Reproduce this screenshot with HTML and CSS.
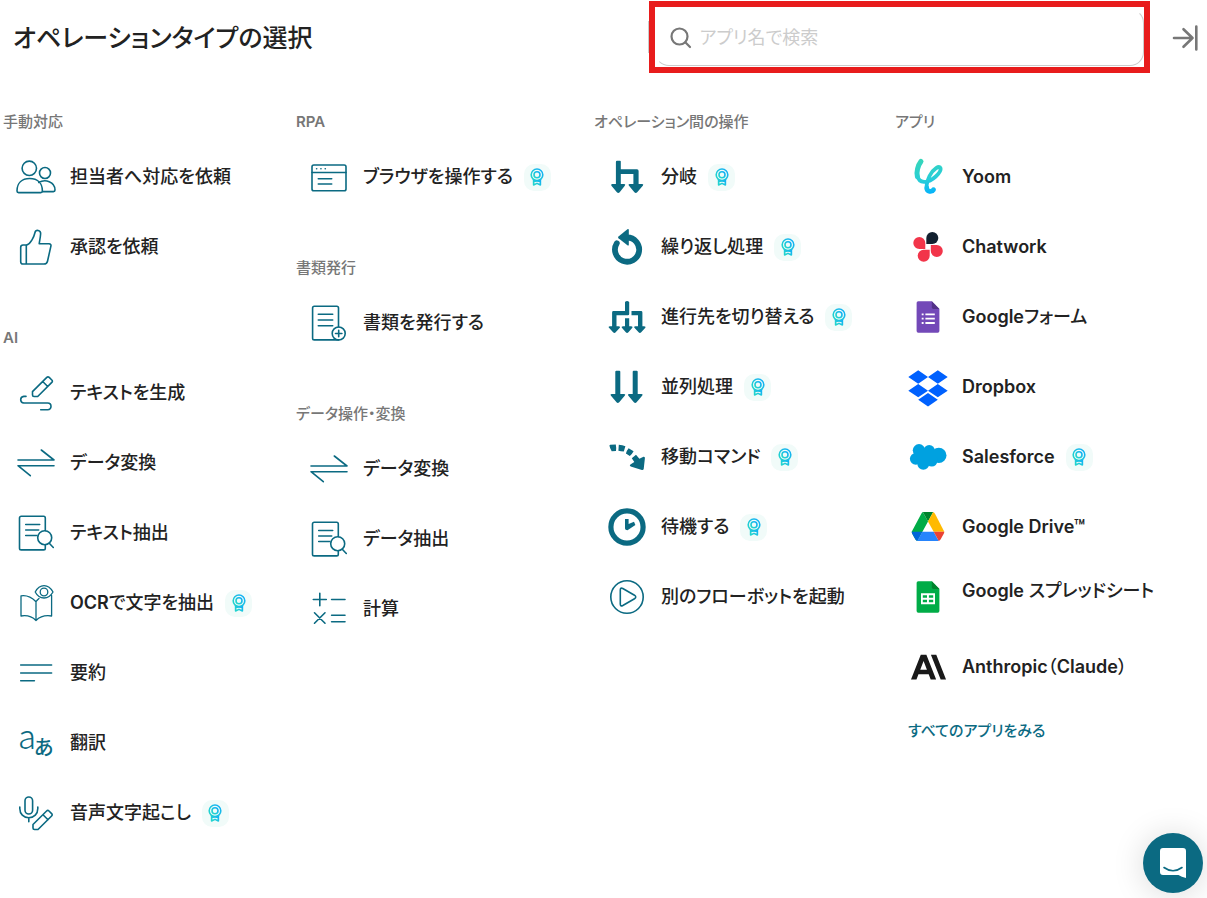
FILE: index.html
```html
<!DOCTYPE html>
<html lang="ja">
<head>
    <meta charset="UTF-8">
    <meta name="viewport" content="width=device-width, initial-scale=1.0">
    <title>オペレーションタイプの選択</title>
    <link rel="stylesheet" href="styles.css">
</head>
<body>
    <!-- shared icons -->
    <svg class="sprite" width="0" height="0" aria-hidden="true">
        <defs>
            <linearGradient id="badge-color" x1="1" y1="0" x2="0" y2="1">
                <stop offset="0.1" stop-color="#12b0f5"/>
                <stop offset="0.8" stop-color="#22d3cf"/>
            </linearGradient>
            <linearGradient id="yoom-color" gradientUnits="userSpaceOnUse" x1="14" y1="2" x2="22" y2="37">
                <stop offset="0" stop-color="#36d6b9"/>
                <stop offset="0.6" stop-color="#27cdd9"/>
                <stop offset="1" stop-color="#04b2fb"/>
            </linearGradient>
        </defs>
        <symbol id="badge" viewBox="0 0 14 18">
            <g fill="none" stroke="url(#badge-color)" stroke-width="1.6" stroke-linejoin="round">
                <circle cx="7" cy="6.8" r="5.8"/>
                <circle cx="7" cy="6.8" r="3"/>
                <path d="M3.6 11.6V17L7 15.4L10.4 17V11.6M3.6 13.6L7 12.8L10.4 13.6"/>
            </g>
        </symbol>
        <symbol id="convert" viewBox="0 0 40 40">
            <path d="M2 17H38L25.3 7M38 22.7H2L14.3 32.7"/>
        </symbol>
        <symbol id="extract" viewBox="0 0 40 40">
            <path d="M29.3 17.5V5a1.7 1.7 0 0 0-1.7-1.7H5.2A1.7 1.7 0 0 0 3.5 5v30.2a1.7 1.7 0 0 0 1.7 1.7h22.4a1.7 1.7 0 0 0 1.7-1.7V32M9.7 11.5h14M9.7 17h13M9.7 22.5h11M33.5 30.5l3.8 4"/>
            <circle cx="28.7" cy="24.7" r="7"/>
        </symbol>
    </svg>

    <header class="header">
        <h1>オペレーションタイプの選択</h1>
        <div class="search-frame">
            <label class="search-box">
                <svg class="search-icon" viewBox="0 0 22 22" role="img" aria-label="検索">
                    <circle cx="9.5" cy="9.5" r="8"/>
                    <path d="M15.3 15.3L20 20"/>
                </svg>
                <input type="search" class="search-input" placeholder="アプリ名で検索">
            </label>
        </div>
        <button class="close-button" aria-label="閉じる">
            <svg width="26" height="26" viewBox="0 0 26 26">
                <path d="M2 13H20.5M11.5 4.2L20.5 13L11.5 21.8M24.3 1.5V24.5"/>
            </svg>
        </button>
    </header>

    <main class="columns">
        <div class="column">
            <section>
                <h2>手動対応</h2>
                <button class="item">
                    <svg class="icon" viewBox="0 0 40 40">
                        <circle cx="13.3" cy="11.3" r="7.2"/>
                        <circle cx="29" cy="16" r="5.5"/>
                        <path d="M1 34C1 26 6 21.5 13.7 21.5S26.4 26 26.4 34Q26.4 35.6 24.8 35.6H2.6Q1 35.6 1 34ZM22.8 25.5C29 21.8 39 24.5 39 33Q39 34.6 37.4 34.6H26.5"/>
                    </svg>
                    <span class="label">担当者へ対応を依頼</span>
                </button>
                <button class="item">
                    <svg class="icon" viewBox="0 0 40 40">
                        <path d="M7 18H10.3V37H7Q4.7 37 4.7 34.7V20.3Q4.7 18 7 18ZM10.3 18.3C14.5 17 18 10 19 5.5C19.6 2.5 25 2.5 24.6 7C24.4 10.5 23.5 14 23.2 16.8H33Q35.4 16.8 34.9 19.2L31.5 34.2Q30.8 37 28 37H10.3"/>
                    </svg>
                    <span class="label">承認を依頼</span>
                </button>
            </section>

            <section>
                <h2><b>AI</b></h2>
                <button class="item">
                    <svg class="icon" viewBox="0 0 40 40">
                        <path d="M10 23.4H7.8Q4.7 23.8 4.7 26.7T7.8 30H31.6Q35 30 35 33.3T31.6 36.7H24.7M16.5 18.6L30.8 4.4Q32 3.2 33.2 4.4L35.8 7Q37 8.2 35.8 9.4L21.7 23.5H18Q16.5 23.5 16.5 22ZM26.7 8.5L31.7 13.5"/>
                    </svg>
                    <span class="label">テキストを生成</span>
                </button>
                <button class="item">
                    <svg class="icon"><use href="#convert"/></svg>
                    <span class="label">データ変換</span>
                </button>
                <button class="item">
                    <svg class="icon"><use href="#extract"/></svg>
                    <span class="label">テキスト抽出</span>
                </button>
                <button class="item">
                    <svg class="icon icon-thin" viewBox="0 0 40 40">
                        <path d="M20 37.5V18.7Q13 11.5 5 12.8V33Q14 31.5 20 37.5Q26 31.5 35.6 33V12.5M20 18.7Q21.3 16.8 23 15.5"/>
                        <path d="M19.2 9C23.5 0.5 32.5 0.5 37 9C32.5 17 23.5 17 19.2 9Z"/>
                        <circle cx="28" cy="9" r="3.8"/>
                    </svg>
                    <span class="label"><b>OCR</b>で文字を抽出</span>
                    <span class="badge"><svg width="14" height="18"><use href="#badge"/></svg></span>
                </button>
                <button class="item">
                    <svg class="icon" viewBox="0 0 40 40">
                        <path d="M4.7 12H35.6M4.7 20H35.6M4.7 27.8H18.4"/>
                    </svg>
                    <span class="label">要約</span>
                </button>
                <button class="item">
                    <svg class="icon icon-text" viewBox="0 0 40 40">
                        <text x="2" y="26" font-size="33">a</text>
                        <text x="18" y="32" font-size="20" font-weight="500">あ</text>
                    </svg>
                    <span class="label">翻訳</span>
                </button>
                <button class="item">
                    <svg class="icon" viewBox="0 0 40 40">
                        <rect x="9" y="4" width="7.6" height="17" rx="3.8"/>
                        <path d="M3.8 14V15.5C3.8 21 7.5 24.7 12.8 24.7S21.8 21 21.8 15.5V14M12.8 24.7V28.8M17 31.5L30.6 18Q31.8 16.8 33 18L35.6 20.6Q36.8 21.8 35.6 23L22 36.5H18.5Q17 36.5 17 35ZM27 21.7L32 26.7"/>
                    </svg>
                    <span class="label">音声文字起こし</span>
                    <span class="badge"><svg width="14" height="18"><use href="#badge"/></svg></span>
                </button>
            </section>
        </div>

        <div class="column">
            <section>
                <h2><b>RPA</b></h2>
                <button class="item">
                    <svg class="icon" viewBox="0 0 40 40">
                        <rect x="3" y="8" width="34" height="25.7" rx="1.8"/>
                        <path d="M3 15.5H37M9.3 21.7H22.7M9.3 27H22.7"/>
                        <path d="M7.6 11.8H7.7M11.9 11.8H12M16.2 11.8H16.3"/>
                    </svg>
                    <span class="label">ブラウザを操作する</span>
                    <span class="badge"><svg width="14" height="18"><use href="#badge"/></svg></span>
                </button>
            </section>

            <section>
                <h2>書類発行</h2>
                <button class="item">
                    <svg class="icon" viewBox="0 0 40 40">
                        <path d="M29.5 23.8V5Q29.5 3.3 27.8 3.3H5.3Q3.6 3.3 3.6 5V35.2Q3.6 36.9 5.3 36.9H29.7M9.3 11.3H23.7M9.3 17H23.7M9.3 22.7H23.7M29.7 27.3V33.7M26.5 30.5H32.9"/>
                        <circle cx="29.7" cy="30.5" r="6.5"/>
                    </svg>
                    <span class="label">書類を発行する</span>
                </button>
            </section>

            <section>
                <h2>データ操作・変換</h2>
                <button class="item">
                    <svg class="icon"><use href="#convert"/></svg>
                    <span class="label">データ変換</span>
                </button>
                <button class="item">
                    <svg class="icon"><use href="#extract"/></svg>
                    <span class="label">データ抽出</span>
                </button>
                <button class="item">
                    <svg class="icon" viewBox="0 0 40 40">
                        <path d="M4.3 10.5H17.3M10.8 4.2V16.8M22.6 10.5H36M5.5 23.8L16 34.2M16 23.8L5.5 34.2M22.6 26.3H36M22.6 32.8H36"/>
                    </svg>
                    <span class="label">計算</span>
                </button>
            </section>
        </div>

        <div class="column">
            <section>
                <h2>オペレーション間の操作</h2>
                <button class="item">
                    <svg class="icon icon-solid" viewBox="0 0 40 40">
                        <path d="M10 3.7H13Q13.8 3.7 13.8 4.5V12.3H30Q31.6 12.3 31.6 14V27H35Q37 27.2 35.8 28.8L30.2 35.2Q28.8 36.8 27.4 35.2L22 28.8Q20.8 27.2 22.8 27H26.4V16.9H13.8V27H17.2Q19 27.2 17.8 28.8L12.7 35.2Q11.3 36.8 9.9 35.2L4.4 28.8Q3.4 27.2 5.4 27H8.9V5Q8.9 3.7 10 3.7Z"/>
                    </svg>
                    <span class="label">分岐</span>
                    <span class="badge"><svg width="14" height="18"><use href="#badge"/></svg></span>
                </button>
                <button class="item">
                    <svg class="icon icon-solid" viewBox="0 0 40 40">
                        <path d="M9.8 16.2A12.1 12.1 0 1 0 20 10.5" fill="none" stroke="#0b6a82" stroke-width="5.8"/>
                        <path d="M11.5 9.4L20.4 2.3Q21.8 1.5 21.8 3.1V18Q21.6 19 20.4 18.3L11.5 11.3Q10.5 10.4 11.5 9.4Z"/>
                    </svg>
                    <span class="label">繰り返し処理</span>
                    <span class="badge"><svg width="14" height="18"><use href="#badge"/></svg></span>
                </button>
                <button class="item">
                    <svg class="icon icon-solid" viewBox="0 0 40 40">
                        <path d="M18 5Q20 2.8 22.2 5V17Q22.2 18.3 20.8 18.3H9.5V29.2H11.5Q13.8 29.5 12.6 31L8.7 35.3Q7.4 36.6 6.1 35.3L2.2 31Q.8 29.5 3 29.2H5.1V15.4Q5.1 14 6.5 14H18ZM24.5 14H34Q35.4 14 35.4 15.4V29.2H37Q39.3 29.5 38.1 31L34.2 35.3Q32.9 36.6 31.6 35.3L27.7 31Q26.3 29.5 28.5 29.2H31V18.3H24.5ZM18 21.3H22.2V29.2H24Q26.3 29.5 25.1 31L21.4 35.3Q20.1 36.6 18.8 35.3L15.1 31Q13.9 29.5 16.2 29.2H18Z"/>
                    </svg>
                    <span class="label">進行先を切り替える</span>
                    <span class="badge"><svg width="14" height="18"><use href="#badge"/></svg></span>
                </button>
                <button class="item">
                    <svg class="icon icon-solid" viewBox="0 0 40 40">
                        <path d="M9.3 3.7H12.3Q13.3 3.7 13.3 4.7V27H17Q19 27.2 17.7 28.8L12.2 35.2Q10.8 36.8 9.5 35.2L4 28.8Q2.8 27.2 4.8 27H8.3V4.7Q8.3 3.7 9.3 3.7ZM26.7 3.7H29.7Q30.7 3.7 30.7 4.7V27H34.4Q36.4 27.2 35.1 28.8L29.6 35.2Q28.2 36.8 26.9 35.2L21.4 28.8Q20.2 27.2 22.2 27H25.7V4.7Q25.7 3.7 26.7 3.7Z"/>
                    </svg>
                    <span class="label">並列処理</span>
                    <span class="badge"><svg width="14" height="18"><use href="#badge"/></svg></span>
                </button>
                <button class="item">
                    <svg class="icon icon-solid" viewBox="0 0 40 40">
                        <path d="M3.2 7.8L8.8 7.4Q9.5 10.7 9 14L4.7 14.2Q2.7 11 2.4 8.6ZM11.8 7.8Q15.5 7.8 18.4 9.3L16.8 14.6Q13.8 14.3 11.4 13.8ZM21.6 11.2L26.6 14.3Q25.2 17 22.8 18.9L18.9 16.5Q19.7 13.5 21.6 11.2ZM29 17.7L32.4 21.8L36.5 19.8Q38.2 19.5 37.9 21.3L36.7 32Q36.3 33.4 34.9 33L23.7 29.5Q22 28.6 23.4 27.5L27.3 25.1L24.8 21.2Z"/>
                    </svg>
                    <span class="label">移動コマンド</span>
                    <span class="badge"><svg width="14" height="18"><use href="#badge"/></svg></span>
                </button>
                <button class="item">
                    <svg class="icon icon-solid" viewBox="0 0 40 40">
                        <circle cx="20" cy="20" r="16.1" fill="none" stroke="#0b6a82" stroke-width="5.2"/>
                        <path d="M18 12H21.6V17L27 14.8L28.4 18L20.5 23.3Q18 23.3 18 21.5Z"/>
                    </svg>
                    <span class="label">待機する</span>
                    <span class="badge"><svg width="14" height="18"><use href="#badge"/></svg></span>
                </button>
                <button class="item">
                    <svg class="icon" viewBox="0 0 40 40">
                        <circle cx="20" cy="20" r="16.2"/>
                        <path d="M13.3 13Q13.3 10.2 15.8 11.5L27.5 18.2Q30 20 27.5 21.8L15.8 28.5Q13.3 29.8 13.3 27Z"/>
                    </svg>
                    <span class="label">別のフローボットを起動</span>
                </button>
            </section>
        </div>

        <div class="column">
            <section>
                <h2>アプリ</h2>
                <button class="item">
                    <svg class="icon icon-yoom" viewBox="0 0 40 40">
                        <path stroke-width="5" d="M13 4.4C9.8 8.5 8.2 15 9.4 19.5"/>
                        <path stroke-width="3.8" d="M9.2 18.5C10.5 23.8 13.5 25.2 17 24.8C24 24.5 33.5 15.5 32.6 11.2C31.6 8 25.3 11.5 21.5 19C18.8 24.5 17.6 31.5 19.5 33.4"/>
                        <path stroke-width="4.8" d="M18.8 31C18.8 35 24 35.3 25.5 32.7"/>
                    </svg>
                    <span class="label"><b>Yoom</b></span>
                </button>
                <button class="item">
                    <svg class="icon icon-logo" viewBox="0 0 40 40">
                        <path fill="#13202f" d="M18.3 17V11A6 6 0 1 1 24.3 17Z"/>
                        <path fill="#f2354a" d="M17.3 22H11.3A6 6 0 1 1 17.3 16ZM21.7 22.8V28.8A6 6 0 1 1 15.7 22.8ZM22.8 18H28.8A6 6 0 1 1 22.8 24Z"/>
                    </svg>
                    <span class="label"><b>Chatwork</b></span>
                </button>
                <button class="item">
                    <svg class="icon icon-logo" viewBox="0 0 40 40">
                        <path fill="#7349b8" d="M10.3 4.3H23.8L31.4 12V34Q31.4 35.7 29.7 35.7H10.3Q8.6 35.7 8.6 34V6Q8.6 4.3 10.3 4.3Z"/>
                        <path fill="#523187" d="M23.8 4.3L31.4 12H25.5Q23.8 12 23.8 10.3Z"/>
                        <path fill="#fff" d="M13.7 16.4H15.6V18.2H13.7ZM17.4 16.4H26.8V18.2H17.4ZM13.7 20.8H15.6V22.6H13.7ZM17.4 20.8H26.8V22.6H17.4ZM13.7 25.1H15.6V26.9H13.7ZM17.4 25.1H26.8V26.9H17.4Z"/>
                    </svg>
                    <span class="label"><b>Google</b>フォーム</span>
                </button>
                <button class="item">
                    <svg class="icon icon-logo" viewBox="0 0 40 40">
                        <path fill="#0061fe" d="M10.2 3.2L20 10L10.2 16.7L.3 10ZM29.8 3.2L39.7 10L29.8 16.7L20 10ZM10.2 17L20 23.7L10.2 30.3L.3 23.7ZM29.8 17L39.7 23.7L29.8 30.3L20 23.7ZM20 26.1L29.8 32.7L20 39.4L10.2 32.7Z"/>
                    </svg>
                    <span class="label"><b>Dropbox</b></span>
                </button>
                <button class="item">
                    <svg class="icon icon-logo" viewBox="0 0 40 40">
                        <g fill="#00a1e0">
                            <circle cx="11" cy="13.3" r="6.2"/>
                            <circle cx="21.2" cy="13.8" r="5.8"/>
                            <circle cx="30.8" cy="18.4" r="7.7"/>
                            <circle cx="7.8" cy="21.8" r="5.9"/>
                            <circle cx="15.3" cy="26.8" r="6"/>
                            <circle cx="23.8" cy="24" r="5.6"/>
                            <path d="M8 14H28V26H10Z"/>
                        </g>
                    </svg>
                    <span class="label"><b>Salesforce</b></span>
                    <span class="badge"><svg width="14" height="18"><use href="#badge"/></svg></span>
                </button>
                <button class="item">
                    <svg class="icon icon-logo" viewBox="0 0 40 40">
                        <path fill="#00ac47" d="M14.8 5L20 14.5L9.4 34Q8 33.5 7.3 32.3L4.4 27Q3.7 25.8 3.7 24.8L13.3 6.8Q13.9 5.4 14.8 5Z"/>
                        <path fill="#00832d" d="M14.8 5H25.2L20 14.5Z"/>
                        <path fill="#ffba00" d="M25.2 5Q26.3 5.6 27 6.8L36.3 24.8H25.7L20 14.5Z"/>
                        <path fill="#0066da" d="M3.7 24.8H14.4L9.2 34Q8 33.5 7.3 32.3L4.4 27Q3.8 26 3.7 24.8Z"/>
                        <path fill="#2684fc" d="M14.4 24.8H25.7L30.8 34H9.2Z"/>
                        <path fill="#ea4335" d="M25.7 24.8H36.3Q36.2 26 35.6 27L32.7 32.3Q32 33.5 30.8 34Z"/>
                    </svg>
                    <span class="label"><b>Google Drive™</b></span>
                </button>
                <button class="item">
                    <svg class="icon icon-logo" viewBox="0 0 40 40">
                        <path fill="#00ac47" d="M10.3 4.3H23.8L31.4 12V34Q31.4 35.7 29.7 35.7H10.3Q8.6 35.7 8.6 34V6Q8.6 4.3 10.3 4.3Z"/>
                        <path fill="#00832d" d="M23.8 4.3L31.4 12H25.5Q23.8 12 23.8 10.3Z"/>
                        <path fill="#fff" fill-rule="evenodd" d="M13 16.3H27V27.2H13ZM14.8 18.2V20.8H19V18.2ZM20.9 18.2V20.8H25.2V18.2ZM14.8 22.7V25.3H19V22.7ZM20.9 22.7V25.3H25.2V22.7Z"/>
                    </svg>
                    <span class="label label-tall"><b>Google</b> スプレッドシート</span>
                </button>
                <button class="item">
                    <svg class="icon icon-logo" viewBox="0 0 40 40">
                        <path fill="#191919" transform="translate(3 2.6) scale(1.46)" d="M17.304 3.541h-3.672l6.696 16.918H24ZM6.696 3.541 0 20.459h3.744l1.37-3.553h7.005l1.369 3.553h3.744L10.536 3.541ZM6.325 13.764l2.291-5.946 2.291 5.946Z"/>
                    </svg>
                    <span class="label"><b>Anthropic</b>（<b>Claude</b>）</span>
                </button>
                <a class="all-apps" href="#">すべてのアプリをみる</a>
            </section>
        </div>
    </main>

    <button class="chat-button" aria-label="チャット">
        <svg width="28" height="32" viewBox="0 0 28 32">
            <path fill="#fff" d="M4 1H24Q27 1 27 4V31Q22.5 30 19.5 28H4Q1 28 1 25V4Q1 1 4 1Z"/>
            <path fill="none" stroke="#0b6a82" stroke-width="1.6" stroke-linecap="round" d="M5 20.5Q14 27 23 20.5"/>
        </svg>
    </button>
</body>
</html>
```
FILE: styles.css
```css
* {
    box-sizing: border-box;
}
body {
    margin: 0;
    min-height: 100vh;
    background-color: #fff;
    color: #222;
    font-family: Inter, "Noto Sans CJK JP", sans-serif;
    font-feature-settings: "palt";
}
button,
input {
    font: inherit;
    font-feature-settings: inherit;
    color: inherit;
}
button {
    padding: 0;
    border: none;
    background: none;
    cursor: pointer;
}
b {
    font-weight: 600;
}
.sprite {
    position: absolute;
}

/* header */
.header {
    display: flex;
    align-items: center;
    padding: 1px 0 0 13px;
}
h1 {
    flex: 1;
    margin: 0;
    padding-top: 2px;
    font-size: 25px;
    font-weight: 500;
    line-height: 40px;
}
.search-frame {
    position: relative;
    width: 42%;
    height: 72px;
    padding-top: 2px;
    border: 6px solid #e81c1c;
}
.search-frame::before {
    content: "";
    position: absolute;
    top: 14px;
    bottom: 14px;
    left: -7px;
    width: 1px;
    background-color: #ccc;
}
.search-box {
    display: flex;
    align-items: center;
    gap: 8px;
    height: 57px;
    padding: 0 14px;
    border: 1px solid #ccc;
    border-top-color: transparent;
    border-left-color: transparent;
    border-radius: 14px;
}
.search-icon {
    width: 22px;
    height: 22px;
    fill: none;
    stroke: #777;
    stroke-width: 2.2;
    stroke-linecap: round;
}
.search-input {
    flex: 1;
    min-width: 0;
    padding: 0;
    border: none;
    outline: none;
    background: none;
    font-size: 18px;
}
.search-input::placeholder {
    color: #ccc;
}
.close-button {
    width: 57px;
    padding: 2px 9px 0 22px;
    line-height: 0;
}
.close-button svg {
    fill: none;
    stroke: #777;
    stroke-width: 2.6;
    stroke-linecap: round;
    stroke-linejoin: round;
}

/* operation lists */
.columns {
    display: grid;
    grid-template-columns: 293fr 298fr 301fr 312fr;
    margin-top: 29px;
    padding-left: 3px;
}
.column {
    display: flex;
    flex-direction: column;
    gap: 36px;
}
h2 {
    margin: 0;
    color: #777;
    font-size: 15px;
    font-weight: 500;
    line-height: 40px;
}
.item {
    display: flex;
    align-items: center;
    width: 100%;
    height: 70px;
    padding-left: 13px;
    text-align: left;
}
.label {
    margin-left: 14px;
    font-size: 18px;
    font-weight: 500;
    line-height: 24px;
    white-space: nowrap;
}
.label-tall {
    min-height: 36px;
}
.icon {
    flex: none;
    width: 40px;
    height: 40px;
    fill: none;
    stroke: #0b6a82;
    stroke-width: 1.6;
    stroke-linecap: round;
    stroke-linejoin: round;
}
.icon-thin {
    stroke-width: 1.3;
}
.icon-solid,
.icon-logo,
.icon-text {
    fill: #0b6a82;
    stroke: none;
}
.icon-text {
    overflow: visible;
    font-family: "Noto Sans CJK JP", sans-serif;
    font-weight: 300;
}
.icon-yoom {
    stroke: url(#yoom-color);
}
.badge {
    display: flex;
    align-items: center;
    justify-content: center;
    width: 27px;
    height: 27px;
    margin-left: 11px;
    border-radius: 10px;
    background-color: #f1fbf9;
}
.all-apps {
    display: inline-block;
    padding: 18px 0 18px 13px;
    color: #0b6a82;
    font-size: 15px;
    font-weight: 500;
    line-height: 22px;
    text-decoration: none;
}

.chat-button {
    position: fixed;
    right: 4px;
    bottom: 5px;
    display: flex;
    align-items: center;
    justify-content: center;
    width: 60px;
    height: 60px;
    border-radius: 50%;
    background-color: #0b6a82;
    box-shadow: 0 2px 32px rgba(0, 0, 0, 0.15);
}
```
